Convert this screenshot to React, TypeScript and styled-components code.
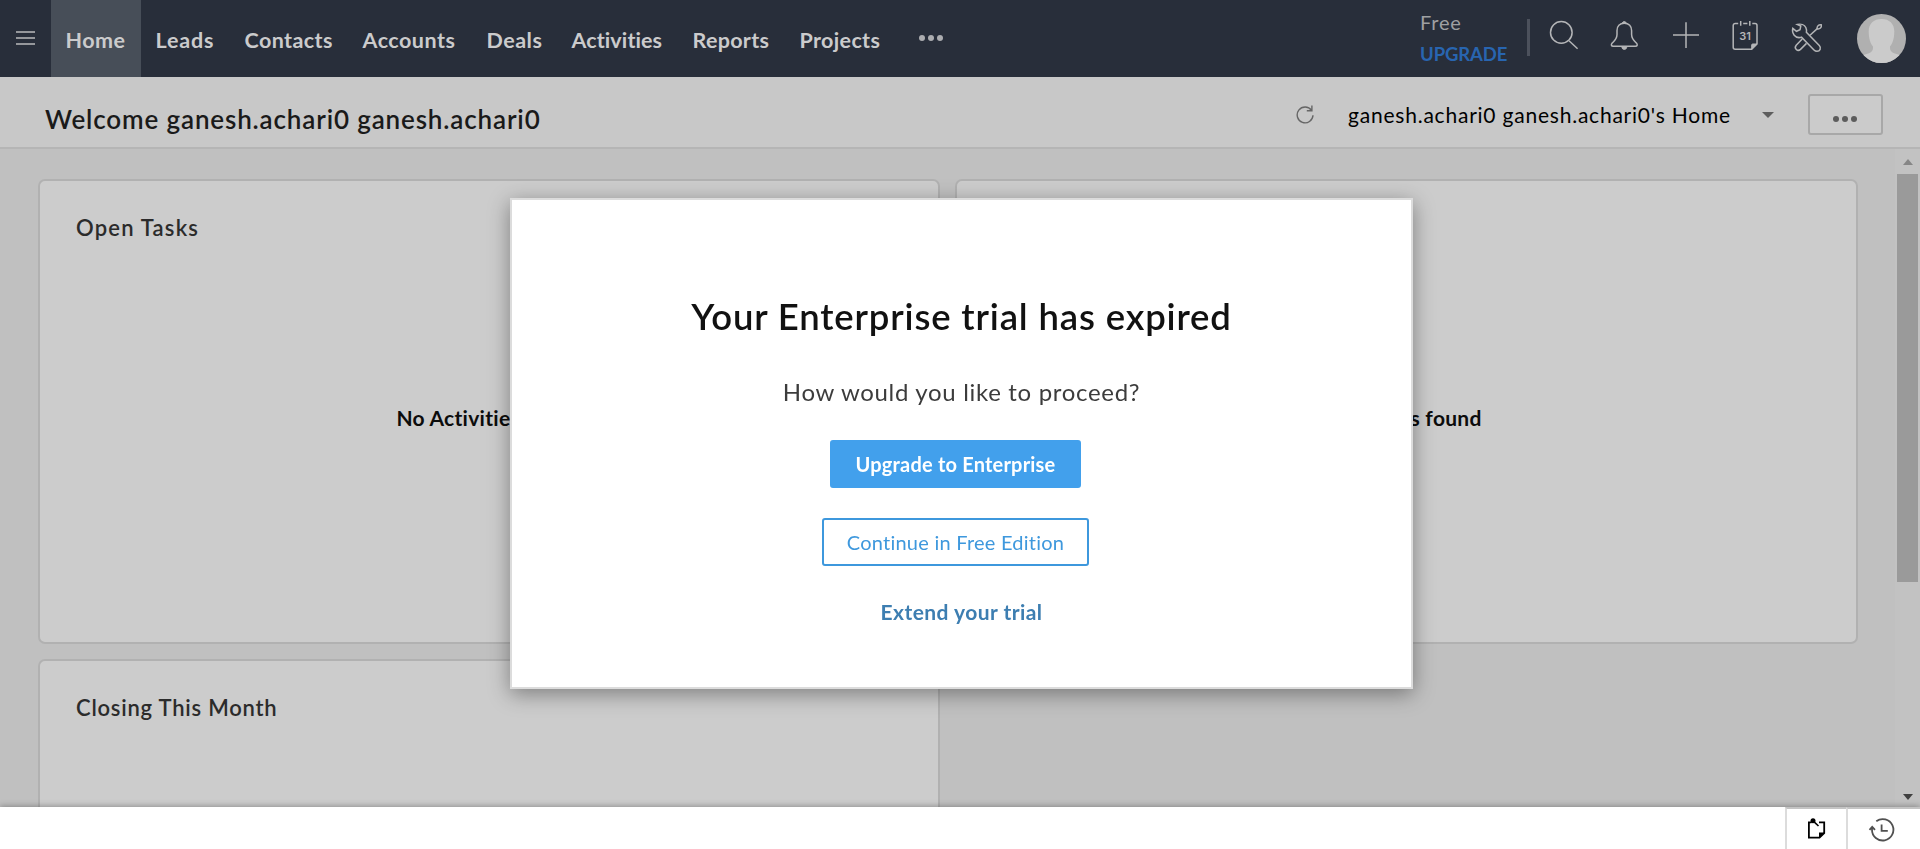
import React, { useState } from "react";
import styled, { createGlobalStyle } from "styled-components";

const GlobalStyle = createGlobalStyle`
  * { box-sizing: border-box; }
  body { margin: 0; overflow: hidden; font-family: Lato, "Open Sans", sans-serif; font-variant-ligatures: none; }
  button { font-family: inherit; cursor: pointer; margin: 0; }
`;

const Shell = styled.div`
  display: flex;
  flex-direction: column;
  width: 100%;
  height: 100vh;
  overflow: hidden;
  background: #c0c0c0;
`;

/* ---------- top navigation ---------- */

const TopBar = styled.header`
  display: flex;
  flex: none;
  height: 77px;
  background: #282e3a;
`;

const MenuButton = styled.button`
  width: 51px;
  padding: 0 0 1px 16px;
  border: 0;
  background: none;
  display: flex;
  align-items: center;
`;

const Nav = styled.nav`
  display: flex;
`;

const Tab = styled.a<{ $width: number; $spacing: number; $active?: boolean }>`
  display: flex;
  align-items: center;
  width: ${(p) => p.$width}px;
  padding: 2px 0 0 14.5px;
  font-size: 21.5px;
  font-weight: 700;
  letter-spacing: ${(p) => p.$spacing}px;
  color: #cbcbcc;
  background: ${(p) => (p.$active ? "#474e58" : "transparent")};
`;

const Dots = styled.span<{ $color: string }>`
  display: flex;
  gap: 3px;
  &::before, &::after { content: ""; }
  &::before, &::after, i {
    width: 6px;
    height: 6px;
    border-radius: 50%;
    background: ${(p) => p.$color};
  }
`;

const MoreTabs = styled.div`
  display: flex;
  align-items: center;
  padding: 0 0 1px 22px;
`;

const Account = styled.div`
  display: flex;
  margin-left: auto;
  padding-right: 14px;
`;

const Plan = styled.div`
  width: 107px;
  padding-top: 7px;
  line-height: 31px;
  font-size: 20px;
  letter-spacing: 0.8px;
  color: #9fa0a2;
`;

const UpgradeLink = styled.a`
  display: block;
  padding-top: 1px;
  font-size: 18.5px;
  font-weight: 700;
  letter-spacing: -0.1px;
  color: #2865b0;
`;

const Divider = styled.span`
  width: 3px;
  height: 37px;
  margin-top: 19px;
  background: #4c515c;
`;

const Tools = styled.div`
  display: flex;
  gap: 29px;
  padding: 20px 33px 0 18px;
  svg { fill: none; stroke: #b4b5b7; stroke-width: 1.5; overflow: visible; }
`;

const Avatar = styled.svg`
  width: 49px;
  height: 49px;
  margin-top: 14px;
`;

/* ---------- page heading ---------- */

const SubHeader = styled.section`
  display: flex;
  align-items: center;
  flex: none;
  height: 72px;
  padding: 5px 37px 0 45px;
  background: #c8c8c8;
  border-bottom: 2px solid #b5b5b5;
`;

const Welcome = styled.h1`
  margin: 8px auto 0 0;
  font-size: 26px;
  font-weight: 600;
  letter-spacing: 0.85px;
  line-height: 32px;
  color: #1a1a1a;
`;

const HomeName = styled.span`
  margin-left: 34px;
  width: 383px;
  white-space: nowrap;
  font-size: 21px;
  letter-spacing: 0.78px;
  color: #000;
`;

const Caret = styled.span<{ $up?: boolean; $color: string; $side: number }>`
  border: solid transparent;
  border-width: ${(p) => (p.$up ? "0" : "6px")} ${(p) => p.$side}px ${(p) => (p.$up ? "6px" : "0")};
  border-${(p) => (p.$up ? "bottom" : "top")}-color: ${(p) => p.$color};
`;

const MenuCaret = styled(Caret)`
  margin-left: 31px;
`;

const MoreButton = styled.button`
  display: flex;
  align-items: center;
  justify-content: center;
  width: 75px;
  height: 41px;
  margin-left: 34px;
  padding: 9px 1px 0 0;
  background: #cbcbcb;
  border: 2px solid #a8a8a8;
  border-radius: 3px;
`;

/* ---------- dashboard ---------- */

const Workspace = styled.main`
  display: flex;
  flex: 1;
  min-height: 0;
`;

const Board = styled.div`
  flex: 1;
  display: grid;
  grid-template-columns: 902px 903px;
  grid-auto-rows: 465px;
  gap: 15px;
  padding: 30px 0 0 38px;
  overflow: hidden;
`;

const Card = styled.article`
  display: flex;
  flex-direction: column;
  padding: 32px 36px 50px;
  background: #cccccc;
  border: 2px solid #b1b1b1;
  border-radius: 7px;
`;

const CardTitle = styled.h2<{ $spacing: number }>`
  margin: 0;
  height: 30px;
  line-height: 30px;
  font-size: 22px;
  font-weight: 600;
  letter-spacing: ${(p) => p.$spacing}px;
  color: #2b2b2b;
`;

const Empty = styled.p`
  margin: auto;
  font-size: 21px;
  font-weight: 700;
  letter-spacing: 0.28px;
  color: #0c0c0c;
`;

const ScrollTrack = styled.div`
  display: flex;
  flex-direction: column;
  align-items: center;
  width: 25px;
  padding: 10px 0 7px;
  background: #c2c2c2;
`;

const Thumb = styled.div`
  width: 21px;
  height: 408px;
  margin: 9px 0 auto;
  background: #9a9a9a;
`;

/* ---------- bottom bar ---------- */

const BottomBar = styled.footer`
  position: relative;
  display: flex;
  flex: none;
  justify-content: flex-end;
  height: 42px;
  background: #fff;
  box-shadow: 0 -1px 6px rgba(0, 0, 0, 0.3);
`;

const BarItem = styled.div<{ $width: number; $pad: number }>`
  width: ${(p) => p.$width}px;
  padding: 9px 0 0 ${(p) => p.$pad}px;
  border-top: 2px solid #c4c4c4;
  border-left: 2px solid #dcdcdc;
  svg { display: block; fill: none; overflow: visible; }
`;

/* ---------- trial dialog ---------- */

const Dialog = styled.section`
  position: fixed;
  top: 198px;
  left: 510px;
  width: 903px;
  height: 491px;
  display: flex;
  flex-direction: column;
  align-items: center;
  padding-top: 94px;
  background: #fff;
  border: 2px solid #dcdcdc;
  box-shadow: 0 5px 20px rgba(0, 0, 0, 0.38);
`;

const DialogTitle = styled.h2`
  margin: 0;
  font-size: 36.5px;
  font-weight: 600;
  line-height: 44px;
  letter-spacing: 0.84px;
  color: #111;
`;

const Question = styled.p`
  margin: 39px 0 33px;
  font-size: 24px;
  line-height: 30px;
  letter-spacing: 0.68px;
  color: #3c3c3c;
`;

const ActionButton = styled.button<{ $primary?: boolean }>`
  width: ${(p) => (p.$primary ? 251 : 267)}px;
  height: 48px;
  margin: 0 12px ${(p) => (p.$primary ? 30 : 32)}px 0;
  padding: 0 0 ${(p) => (p.$primary ? 0 : 1)}px;
  border: 2px solid ${(p) => (p.$primary ? "#42a0ec" : "#3e98dd")};
  border-radius: 3px;
  background: ${(p) => (p.$primary ? "#42a0ec" : "#fff")};
  color: ${(p) => (p.$primary ? "#fff" : "#3e98dd")};
  font-size: 20px;
  font-weight: ${(p) => (p.$primary ? 700 : 400)};
  letter-spacing: ${(p) => (p.$primary ? 0.2 : 0.24)}px;
`;

const ExtendLink = styled.a`
  font-size: 21px;
  font-weight: 700;
  line-height: 28px;
  letter-spacing: 0.45px;
  color: #3d7eb1;
`;

const tabs = [
  { label: "Home", width: 90, spacing: 0.5 },
  { label: "Leads", width: 89, spacing: 0.8 },
  { label: "Contacts", width: 118, spacing: 0.4 },
  { label: "Accounts", width: 124, spacing: 0.5 },
  { label: "Deals", width: 85, spacing: 0.5 },
  { label: "Activities", width: 121, spacing: 0.1 },
  { label: "Reports", width: 107, spacing: 0.3 },
  { label: "Projects", width: 112, spacing: 0.35 },
];

function HeaderTools() {
  return (
    <Tools>
      <svg width="32" height="32">
        <circle cx="13.3" cy="12.4" r="10.8" />
        <path d="M21 20.7 29.6 28.7" />
      </svg>
      <svg width="32" height="32">
        <path d="M15.3 3.2C10.6 3.2 8 6.4 8 10.6v4c0 4.3-2.2 6-4.8 8.5-1.4 1.5-1 3.2 1 3.2h22.2c2 0 2.4-1.7 1-3.2-2.6-2.5-4.8-4.2-4.8-8.5v-4c0-4.2-2.6-7.4-7.3-7.4Z" />
        <path d="M13.4 3a2 2 0 0 1 3.8 0ZM12.8 27.5a2.6 2.6 0 0 0 5 0Z" fill="#b4b5b7" strokeWidth="1" />
      </svg>
      <svg width="32" height="32">
        <path d="M3 15H29M16 2.3V28" />
      </svg>
      <svg width="32" height="32">
        <path d="M7.2 3.4H4.2a2 2 0 0 0-2 2v21.8a2 2 0 0 0 2 2H20.7L26 24V5.4a2 2 0 0 0-2-2h-2.7M12.2 3.4h4.2M9.7 1v4.8M18.8 1v4.8" />
        <path d="M20.7 29.2V25a1 1 0 0 1 1-1H26Z" fill="#b4b5b7" strokeWidth="1" />
        <text x="14.2" y="19.6" textAnchor="middle" fontFamily="Inter, sans-serif" fontSize="11" fontWeight="600" fill="#b4b5b7" stroke="none">31</text>
      </svg>
      <svg width="32" height="34">
        <path d="M.8 8.3 4.5 11.3 8 9.8 8.8 6 5.3 4.5C9 3.5 12.5 4.8 13.8 7.5c.8 1.8 1 3.3.6 4.7L27.3 25.5c2.3 2.5.7 5.8-2.3 5.8-1.2 0-2.2-.5-3-1.3L9.5 17.2C7 18 4 17.4 2.2 15.2.6 13.2.2 10.7.8 8.3Z" />
        <path d="M18 15.3 25.3 8.6" />
        <path d="M25.1 8.8c-.4-2.6 1.4-4.4 4.2-4 .5 2.6-1.3 4.5-4.2 4Z" />
        <path d="M10.2 19 4.2 25.2c-2.6 3.2 1.4 6.8 4.3 4.2l6-6" />
      </svg>
    </Tools>
  );
}

export default function App() {
  const [active, setActive] = useState("Home");
  return (
    <Shell>
      <GlobalStyle />
      <TopBar>
        <MenuButton aria-label="Menu">
          <svg width="19" height="14" stroke="#b9babc" strokeWidth="1.6">
            <path d="M0 1H19M0 7H19M0 13H19" />
          </svg>
        </MenuButton>
        <Nav>
          {tabs.map((t) => (
            <Tab key={t.label} $width={t.width} $spacing={t.spacing} $active={t.label === active} onClick={() => setActive(t.label)}>
              {t.label}
            </Tab>
          ))}
        </Nav>
        <MoreTabs><Dots $color="#acadb0"><i /></Dots></MoreTabs>
        <Account>
          <Plan>
            Free
            <UpgradeLink>UPGRADE</UpgradeLink>
          </Plan>
          <Divider />
          <HeaderTools />
          <Avatar viewBox="0 0 49 49">
            <clipPath id="avatar"><circle cx="24.5" cy="24.5" r="24.5" /></clipPath>
            <g clipPath="url(#avatar)">
              <rect width="49" height="49" fill="#b0b0b0" />
              <path d="M24.5 5C16.5 5 11.5 10 11.7 18c.2 7 1.5 11 4.3 14.5.3 3.5-1 5.5-4 6.7L3 42v8h43v-8l-9-2.8c-3-1.2-4.3-3.2-4-6.7C35.8 29 37.1 25 37.3 18 37.5 10 32.5 5 24.5 5Z" fill="#cbcbcb" />
            </g>
          </Avatar>
        </Account>
      </TopBar>

      <SubHeader>
        <Welcome>Welcome ganesh.achari0 ganesh.achari0</Welcome>
        <svg width="18" height="20" fill="none" stroke="#666" strokeWidth="1.4">
          <path d="M15.5 5.3A7.9 7.9 0 1 0 17 10.3M15.9 .5V5.8H10.8" />
        </svg>
        <HomeName>ganesh.achari0 ganesh.achari0's Home</HomeName>
        <MenuCaret $color="#5e5e5e" $side={6} />
        <MoreButton aria-label="More"><Dots $color="#5c5c5c"><i /></Dots></MoreButton>
      </SubHeader>

      <Workspace>
        <Board>
          <Card>
            <CardTitle $spacing={1.2}>Open Tasks</CardTitle>
            <Empty>No Activities found</Empty>
          </Card>
          <Card>
            <CardTitle $spacing={1} />
            <Empty>No Leads found</Empty>
          </Card>
          <Card>
            <CardTitle $spacing={0.78}>Closing This Month</CardTitle>
          </Card>
        </Board>
        <ScrollTrack>
          <Caret $up $color="#868686" $side={5.5} />
          <Thumb />
          <Caret $color="#404040" $side={5.5} />
        </ScrollTrack>
      </Workspace>

      <BottomBar>
        <BarItem $width={61} $pad={21}>
          <svg width="17" height="21">
            <path d="M3.5 4.3H.9V19.6H11.5L16.2 15V4.3H11" stroke="#000" strokeWidth="1.8" />
            <path d="M11 20V14.5H16.5Z" fill="#000" />
            <circle cx="5" cy="2.8" r="2.5" fill="#000" />
            <path d="M5 2.8 10.5 8" stroke="#000" strokeWidth="1.6" />
          </svg>
        </BarItem>
        <BarItem $width={74} $pad={21}>
          <svg width="26" height="24" stroke="#505050" strokeWidth="1.8">
            <path d="M7.3 3.2A10.7 10.7 0 1 1 3 11.5V10" />
            <path d="M.5 11.8 3.2 8.8 6 11.8M12.6 6.5V12.9H18.8" />
          </svg>
        </BarItem>
      </BottomBar>

      <Dialog role="dialog">
        <DialogTitle>Your Enterprise trial has expired</DialogTitle>
        <Question>How would you like to proceed?</Question>
        <ActionButton $primary>Upgrade to Enterprise</ActionButton>
        <ActionButton>Continue in Free Edition</ActionButton>
        <ExtendLink>Extend your trial</ExtendLink>
      </Dialog>
    </Shell>
  );
}
